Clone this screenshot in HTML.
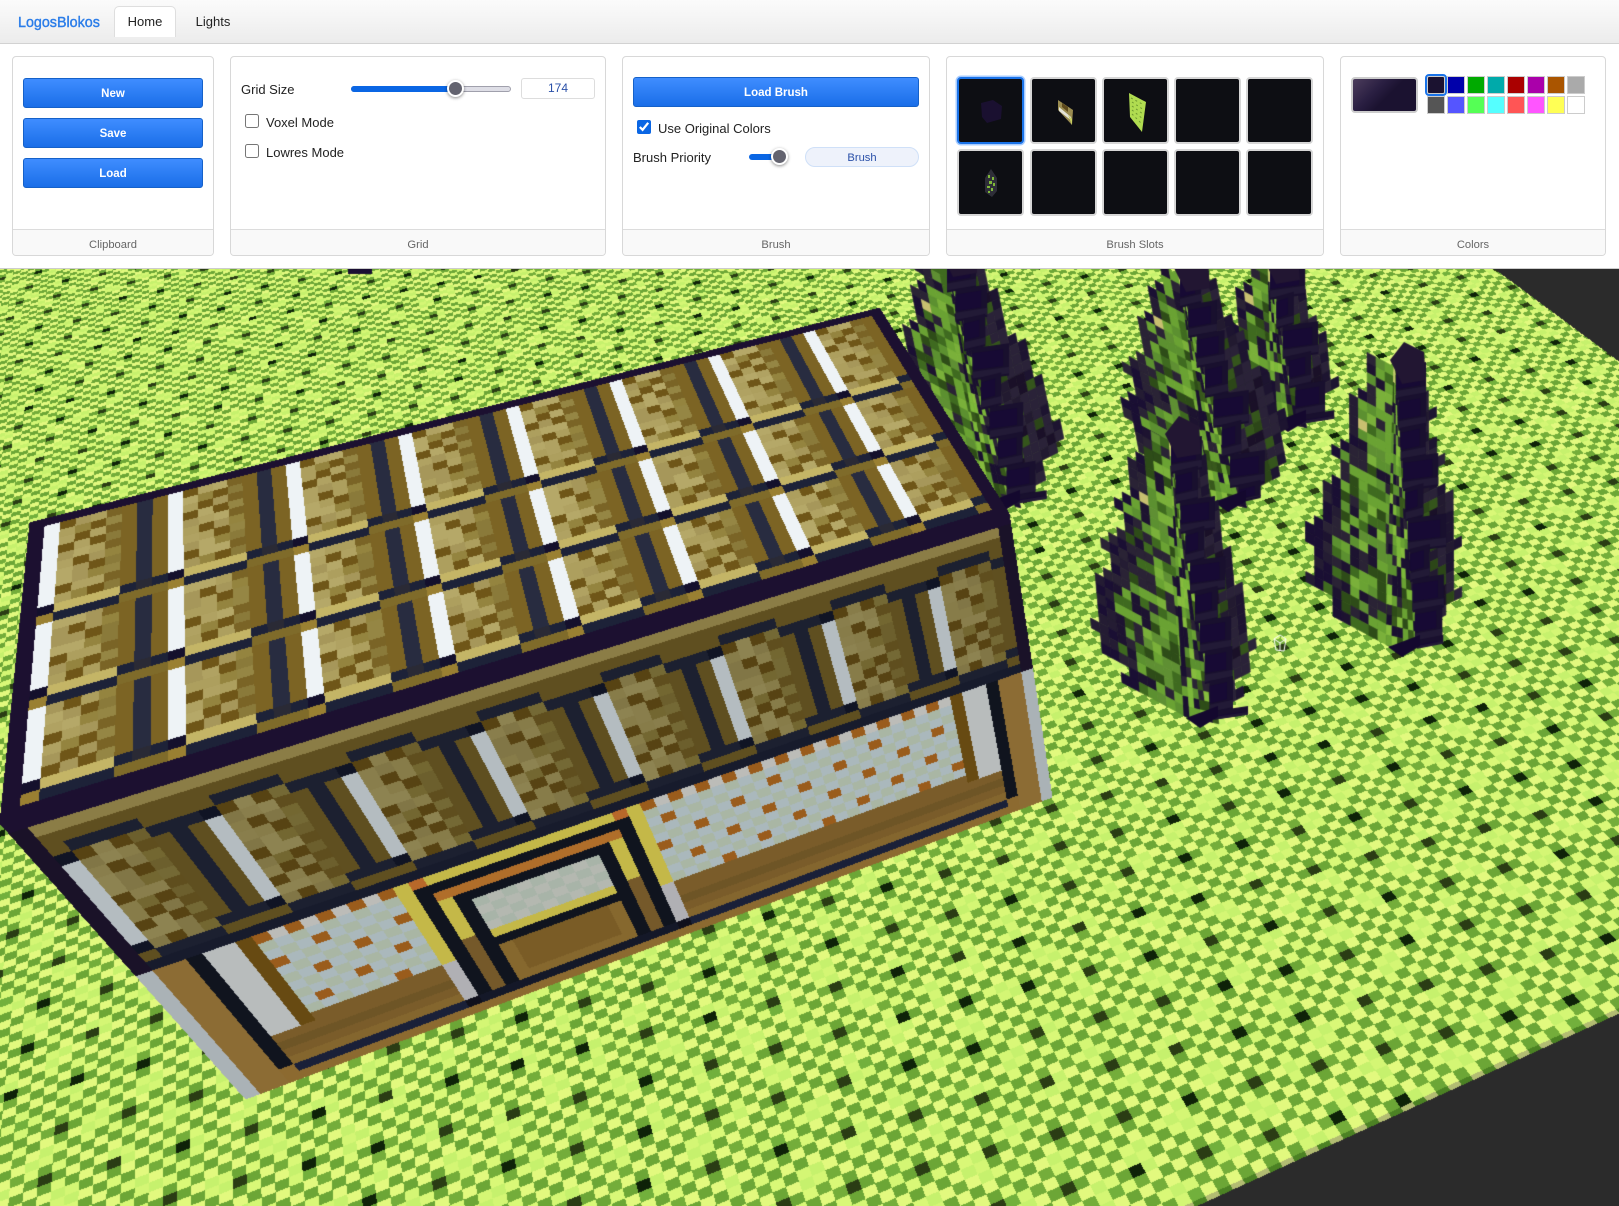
<!DOCTYPE html>
<html lang="en"><head><meta charset="utf-8"><title>LogosBlokos</title>
<style>
*{box-sizing:border-box}
html,body{margin:0;padding:0;width:1619px;height:1206px;overflow:hidden;background:#2b2b2b;font-family:"Liberation Sans",sans-serif;color:#222}
canvas{position:absolute;left:0;top:0;z-index:1}
#hdr{position:absolute;left:0;top:0;width:1619px;height:269px;background:#fff;border-bottom:1px solid #ccc;z-index:2}
#bar{position:absolute;left:0;top:0;width:1619px;height:44px;background:linear-gradient(#fbfbfb,#ececec);border-bottom:1px solid #d2d2d2}
.logo{position:absolute;left:18px;top:15px;font-size:14.3px;line-height:16px;color:#2b7de9;font-weight:400;-webkit-text-stroke:.4px #2b7de9}
.tab{position:absolute;top:6px;height:31px;font-size:13px;line-height:31px;text-align:center}
.tab.on{left:114px;width:62px;background:#fff;border:1px solid #dedede;border-bottom:0;border-radius:5px 5px 0 0;line-height:30px}
.p{position:absolute;top:56px;height:200px;border:1px solid #d8d8d8;border-radius:4px;background:#fff;overflow:hidden}
.p .f{position:absolute;left:0;right:0;bottom:0;height:26px;background:#f9f9f9;border-top:1px solid #dcdcdc;text-align:center;font-size:11.2px;line-height:30px;color:#666}
.a{position:absolute}
.b{position:absolute;background:linear-gradient(#3f8dff,#1a6ee8);border:1px solid #1561c9;border-radius:3px;color:#fff;font-weight:700;font-size:11.5px;text-align:center;line-height:31px;height:30px}
.t{position:absolute;font-size:13px;line-height:16px;color:#222}
.s{position:absolute;width:67px;height:67px;background:#0d0e13;border:2px solid #d6d6d6;border-radius:4px}
.c{position:absolute;width:18px;height:18px;border:1px solid #ccc}
.th{position:absolute;width:17px;height:17px;border-radius:50%;background:#63636f;border:2px solid #fff;box-shadow:0 1px 3px rgba(0,0,0,.45)}
input{position:absolute;margin:0;width:14px;height:14px;accent-color:#0a66e4}
</style></head><body>
<canvas id="c" width="1619" height="1206"></canvas>
<div id="hdr">
<div id="bar">
<div class="logo">LogosBlokos</div>
<div class="tab on">Home</div>
<div class="tab" style="left:195px;width:36px">Lights</div>
</div>

<div class="p" style="left:12px;width:202px">
<div class="b" style="left:10px;top:21px;width:180px">New</div>
<div class="b" style="left:10px;top:61px;width:180px">Save</div>
<div class="b" style="left:10px;top:101px;width:180px">Load</div>
<div class="f">Clipboard</div>
</div>

<div class="p" style="left:230px;width:376px">
<div class="t" style="left:10px;top:25px">Grid Size</div>
<div class="a" style="left:120px;top:29px;width:160px;height:6px;background:#dedee6;border:1px solid #a0a0ac;border-radius:3px"></div>
<div class="a" style="left:120px;top:29px;width:105px;height:6px;background:#0a66e4;border-radius:3px"></div>
<div class="th" style="left:216px;top:23px"></div>
<div class="a" style="left:290px;top:21px;width:74px;height:21px;border:1px solid #ddd;border-radius:3px;text-align:center;font-size:12px;line-height:19px;color:#2a50a8">174</div>
<input type="checkbox" style="left:14px;top:57px">
<div class="t" style="left:35px;top:58px">Voxel Mode</div>
<input type="checkbox" style="left:14px;top:87px">
<div class="t" style="left:35px;top:88px">Lowres Mode</div>
<div class="f">Grid</div>
</div>

<div class="p" style="left:622px;width:308px">
<div class="b" style="left:10px;top:20px;width:286px">Load Brush</div>
<input type="checkbox" checked style="left:14px;top:63px">
<div class="t" style="left:35px;top:64px">Use Original Colors</div>
<div class="t" style="left:10px;top:93px">Brush Priority</div>
<div class="a" style="left:126px;top:97px;width:32px;height:6px;background:#0a66e4;border-radius:3px"></div>
<div class="th" style="left:148px;top:91px"></div>
<div class="a" style="left:182px;top:90px;width:114px;height:20px;background:#eef2fb;border:1px solid #cfe0f8;border-radius:10px;text-align:center;font-size:11.2px;line-height:20px;color:#2a50a8">Brush</div>
<div class="f">Brush</div>
</div>

<div class="p" style="left:946px;width:378px">
<div class="s" style="left:10px;top:20px;border-color:#1a73e8;box-shadow:0 0 0 1.5px #a8ccff"><svg width="63" height="63" style="position:absolute;left:0;top:0"><polygon points="22,24 34,21 43,27 42,40 28,44 23,38" fill="#1a1030"/></svg></div>
<div class="s" style="left:83px;top:20px"><svg width="63" height="63" style="position:absolute;left:0;top:0"><polygon points="26,21 41,31 40,46 26,31" fill="#9a8c50"/><polygon points="27,28 39,38 40,42 27,32" fill="#e4e4d8"/><polygon points="30,24 36,28 36,33 30,28" fill="#5e4a1c"/><polygon points="36,36 40,40 40,46" fill="#c8d060"/></svg></div>
<div class="s" style="left:155px;top:20px"><svg width="63" height="63" style="position:absolute;left:0;top:0"><polygon points="25,14 42,23 38,53 26,38" fill="#b0dc50"/><g stroke="#6f9a30" stroke-width="1" stroke-dasharray="2 3"><line x1="27" y1="19" x2="40" y2="26"/><line x1="28" y1="23" x2="40" y2="31"/><line x1="28" y1="27" x2="39" y2="35"/><line x1="28" y1="31" x2="39" y2="40"/><line x1="28" y1="35" x2="38" y2="45"/></g></svg></div>
<div class="s" style="left:227px;top:20px"></div>
<div class="s" style="left:299px;top:20px"></div>
<div class="s" style="left:10px;top:92px"><svg width="63" height="63" style="position:absolute;left:0;top:0"><polygon points="32,18 38,27 38,40 33,46 26,41 26,27" fill="#2e2e38"/><g fill="#7fb83a"><rect x="29" y="24" width="2" height="3"/><rect x="33" y="26" width="2" height="3"/><rect x="30" y="30" width="3" height="3"/><rect x="34" y="32" width="2" height="3"/><rect x="28" y="35" width="3" height="2"/><rect x="32" y="37" width="2" height="3"/><rect x="29" y="40" width="2" height="2"/></g></svg></div>
<div class="s" style="left:83px;top:92px"></div>
<div class="s" style="left:155px;top:92px"></div>
<div class="s" style="left:227px;top:92px"></div>
<div class="s" style="left:299px;top:92px"></div>
<div class="f">Brush Slots</div>
</div>

<div class="p" style="left:1340px;width:266px">
<div class="a" style="left:10px;top:20px;width:67px;height:36px;border:2px solid #ccc;border-radius:4px;background:linear-gradient(135deg,#4c3d5c 0%,#2a1f42 35%,#1b1230 55%)"></div>
<div class="c" style="left:85.5px;top:19px;background:#1b1230;outline:2px solid #1a73e8;outline-offset:0;border-radius:2px"></div>
<div class="c" style="left:105.5px;top:19px;background:#0000aa"></div>
<div class="c" style="left:125.5px;top:19px;background:#00aa00"></div>
<div class="c" style="left:145.5px;top:19px;background:#00aaaa"></div>
<div class="c" style="left:165.5px;top:19px;background:#aa0000"></div>
<div class="c" style="left:185.5px;top:19px;background:#aa00aa"></div>
<div class="c" style="left:205.5px;top:19px;background:#aa5500"></div>
<div class="c" style="left:225.5px;top:19px;background:#aaaaaa"></div>
<div class="c" style="left:85.5px;top:39px;background:#555555"></div>
<div class="c" style="left:105.5px;top:39px;background:#5555ff"></div>
<div class="c" style="left:125.5px;top:39px;background:#55ff55"></div>
<div class="c" style="left:145.5px;top:39px;background:#55ffff"></div>
<div class="c" style="left:165.5px;top:39px;background:#ff5555"></div>
<div class="c" style="left:185.5px;top:39px;background:#ff55ff"></div>
<div class="c" style="left:205.5px;top:39px;background:#ffff55"></div>
<div class="c" style="left:225.5px;top:39px;background:#ffffff"></div>
<div class="f">Colors</div>
</div>
</div>

<script>
(function(){
var W=1619,H=1206,C=document.getElementById('c'),ctx=C.getContext('2d');
ctx.fillStyle='#2b2b2b';ctx.fillRect(0,0,W,H);
function hex(c){return [parseInt(c.slice(1,3),16),parseInt(c.slice(3,5),16),parseInt(c.slice(5,7),16)]}
var cache={};function hx(c){return cache[c]||(cache[c]=hex(c))}
function hash(i,j){var h=(Math.imul(i,73856093)^Math.imul(j,19349663));h=Math.imul(h^(h>>>13),1274126177);return ((h^(h>>>16))>>>0)%100}
function md(a,b){return ((a%b)+b)%b}

/* ground */
var V1x=7020,V1y=-1450,V2x=165,V2y=-720,Ox=1400,Oy=1107,AL=0.0021,BE=0.0052,AMAX=0.1559;
function tile(i,j){
 var h=hash(i,j);
 if(md(j-5*i,26)==0)return h%3==0?'#0e2208':'#2a3c14';
 var even=md(i+j,2)==0,s=Math.sin(i*1.37+j*.53)+Math.sin(i*.61-j*1.13),plain=s>1.05;
 if(plain){ if(even)return '#d4f674'; return h<10?'#72b03c':'#c6f16d'; }
 if(even)return h%3?'#e2f97e':'#d9f877';
 return h%4?'#6ca636':'#74ad3a';
}
var img=ctx.getImageData(0,0,W,H),D=img.data;
for(var y=268;y<H;y++){for(var x=0;x<W;x++){
 var p=(y*W+x)*4,ax=V1x-x,ay=V1y-y,bx=V2x-x,by=V2y-y,dx=x-Ox,dy=y-Oy,det=ax*by-bx*ay;
 var a=(dx*by-bx*dy)/det,b=(ax*dy-dx*ay)/det;
 if(a>AMAX)continue;
 if(b<-0.0024)continue;
 var i=Math.floor(a/AL),col;
 if(b<0){col=hx(md(i,2)?'#4c8224':'#b2bc72');}
 else{col=hx(tile(i,Math.floor(b/BE)));}
 D[p]=col[0];D[p+1]=col[1];D[p+2]=col[2];D[p+3]=255;
}}
ctx.putImageData(img,0,0);

/* trees */
function rnd(seed){var s=seed;return function(){s=(s*16807)%2147483647;return (s-1)/2147483646}}
function cell(x,y,ux,uy,vx,vy,c){ctx.fillStyle=c;ctx.strokeStyle=c;ctx.lineWidth=.7;ctx.beginPath();ctx.moveTo(x,y);ctx.lineTo(x+ux,y+uy);ctx.lineTo(x+ux+vx,y+uy+vy);ctx.lineTo(x+vx,y+vy);ctx.closePath();ctx.fill();ctx.stroke()}
function pick(r,a){return a[Math.floor(r()*a.length)]}
var INNER=['#6aa233','#6aa233','#5c9030','#5f8f33','#7ab03a','#3f6a20','#2e4c18','#2a2335','#3f6a20','#1d1330'];
var MID=['#6aa233','#3f6a20','#2e4c18','#2a2335','#1d1330','#2a2335','#5c9030','#1d1330'];
var OUTER=['#1a0f33','#241c33','#1a0f33','#2a2335'];
var RIGHT=['#2a2238','#221a30','#2a2238','#35551c','#2c4618','#1a1028','#2a2238'];
var STRIP=['#7cb83a','#6aa233','#5c9030','#38581c','#1a1030','#2a2335','#86bc3e','#2e4c18','#1a1030','#1a1030'];
function tree(t){
 var r=rnd(t.seed),N=Math.round((t.y1-t.y0)/10),vy=(t.y1-t.y0)/N,vx=(t.x1-t.x0)/N,q,c,f;
 function prof(q){var f=q/N,b;b=f<.7?.25+f*1.07:f<.92?1:.74;return b+.06*Math.sin(q*1.3+t.seed);}
 for(q=0;q<N;q++){
  var w=Math.round(t.R*prof(q)+.3);
  for(c=w-1;c>=0;c--){
   var cc=c>=w-1?pick(r,['#1d1430','#2a2238']):pick(r,RIGHT);
   cell(t.x0+vx*q+c*8+10,t.y0+vy*q-c*4,8,-4,vx,vy,cc);
  }
 }
 for(q=0;q<N;q++){
  var wl=Math.round(t.L*prof(q)+.3);
  for(c=wl-1;c>=0;c--){
   var k=c/wl,cl=k>.72?pick(r,OUTER):k>.45?pick(r,MID):pick(r,INNER);
   if(q==Math.round(N*.24)&&c==wl-2)cl='#c8c070';
   cell(t.x0+vx*q-(c+1)*9,t.y0+vy*q-(c+1)*4.8+4.8,9,4.8,vx,vy,cl);
  }
 }
 var M=6;
 for(q=0;q<N;q++){
  f=q/N;
  var wd=5+30*f,x=t.x0+vx*q-10*f,wn=5+30*(q+1)/N;
  for(c=0;c<M;c++){
   var s=pick(r,STRIP);if(q<2&&c<2)s='#c8d070';
   cell(x+wd*c/M,t.y0+vy*q+c*1.3,wd/M,1.3,vx-10/N+(wn-wd)*c/M,vy,s);
  }
 }
 for(q=0;q<N;q+=3){
  f=q/N;
  var xr=t.x0+vx*q-10*f+5+30*f,bw=23+9*Math.sin(q*.9+t.seed)+r()*4,yy=t.y0+vy*q+5,hh=Math.min(vy*3+3,(N-q)*vy-2);
  ctx.fillStyle='#19102e';
  ctx.beginPath();ctx.moveTo(xr-3,yy);ctx.lineTo(xr+bw,yy-5);ctx.lineTo(xr+bw,yy+hh-5);ctx.lineTo(xr-3,yy+hh);ctx.closePath();ctx.fill();
  ctx.fillStyle='#170a34';
  ctx.beginPath();ctx.moveTo(xr-3,yy+5);ctx.lineTo(xr+bw-6,yy+1);ctx.lineTo(xr+bw-6,yy+hh*.55);ctx.lineTo(xr-3,yy+hh*.55+4);ctx.closePath();ctx.fill();
  ctx.fillStyle='#221a36';
  ctx.beginPath();ctx.moveTo(xr-3,yy+hh*.6+4);ctx.lineTo(xr+bw,yy+hh*.6-1);ctx.lineTo(xr+bw,yy+hh-7);ctx.lineTo(xr-3,yy+hh-2);ctx.closePath();ctx.fill();
 }
 ctx.fillStyle='#221632';
 ctx.beginPath();ctx.moveTo(t.x0-4,t.y0-2);ctx.lineTo(t.x0+10,t.y0-20);ctx.lineTo(t.x0+30,t.y0-10);ctx.lineTo(t.x0+32,t.y0+18);ctx.lineTo(t.x0+8,t.y0+22);ctx.closePath();ctx.fill();
 ctx.fillStyle='#14082e';
 ctx.beginPath();ctx.moveTo(t.x1-8,t.y1+2);ctx.lineTo(t.x1+24,t.y1-10);ctx.lineTo(t.x1+24,t.y1+1);ctx.lineTo(t.x1+6,t.y1+12);ctx.closePath();ctx.fill();
}
ctx.save();ctx.beginPath();ctx.rect(0,269,W,H);ctx.clip();
ctx.fillStyle='#1a0f33';ctx.fillRect(348,269,24,5);
tree({x0:1268,y0:262,x1:1282,y1:420,L:6,R:5,seed:71});
tree({x0:1178,y0:270,x1:1222,y1:500,L:9,R:7,seed:29});
tree({x0:945,y0:255,x1:996,y1:500,L:9,R:7,seed:113});
tree({x0:1394,y0:362,x1:1396,y1:645,L:9,R:6,seed:57});
tree({x0:1169,y0:436,x1:1194,y1:716,L:10,R:6,seed:91});
ctx.restore();

/* cursor */
ctx.strokeStyle='#fff';ctx.lineWidth=1;ctx.beginPath();
ctx.moveTo(1274,639);ctx.lineTo(1280,635);ctx.lineTo(1286,639);ctx.lineTo(1280,643);ctx.closePath();
ctx.moveTo(1274,639);ctx.lineTo(1276,650);ctx.lineTo(1284,651);ctx.lineTo(1286,639);
ctx.moveTo(1280,643);ctx.lineTo(1280,651);ctx.stroke();

/* house textures */
function kind(c){var k=(c-1)%8;return k==0?'w':k<=4?'c':(k==5||k==7)?'b':'n'}
var PAT=['TTMT','DTTD','TMDT','TDTD','DTDT','TTTD','TDTM','TTDT'];
function checker(c,r,last){
 var i=(c-1)%8-1,h=hash(c,r),m=PAT[r%8].charAt(i);
 if(last)return '#c4b566';
 if(m=='D')return i==3?'#7a6426':'#6f5618';
 if(m=='M')return '#94843f';
 if(i==3)return h%2?'#8a7a3a':'#958644';
 return ['#ad9f5e','#b5a868','#a6975a','#b0a262'][h%4];
}
function roof(c,r){
 if(c<=0||c>=63||r<=0||r>=31)return '#1c1030';
 var k=kind(c);
 if(r==11||r==20||r==29){return k=='w'?'#14102c':k=='c'?checker(c,r,true):k=='b'?'#1d2238':'#2a2a35';}
 if(r==12||r==21||r==30){return k=='w'?'#9a8032':k=='c'?'#1d2238':'#7f6b2a';}
 return k=='w'?'#eef3f6':k=='b'?'#7c6424':k=='n'?'#282c40':checker(c,r,false);
}
function shade(s,m){var v=hx(s);return '#'+[v[0],v[1],v[2]].map(function(n){var q=Math.round(n*m).toString(16);return q.length<2?'0'+q:q}).join('')}
function lower(c,r){
 var Y='#c4b848',N='#10141e',BR='#75592a',G='#b8bcbc';
 if(c==0||c==63)return '#aab2b6';
 if(c<=2||c>=61)return '#8c6c34';
 if(c==3||c==60)return r>=31?'#8c6a30':N;
 if(r==32)return '#8c6a30';
 if(c>=16&&c<=32){
  if(r==31)return c==16||c==32?'#10101c':'#141828';
  if(c==16||c==32)return r<=25?Y:'#b0b0b4';
  if(c==17||c==31)return r==16?'#b8682a':N;
  if(r==16)return Y;
  if(r==17)return N;
  if(r==18)return '#b06e2a';
  if(c==18||c==30)return r<=23?Y:BR;
  if(r==19)return N;
  if(c==19||c==29)return N;
  if(r<=23)return (c+r)%2?'#b4b8b0':'#a8b4a8';
  if(r==24)return Y;
  if(r==25)return N;
  return c==20||c==28||r==30?'#86682e':'#7a5c26';
 }
 if(r==31)return '#1a2038';
 if(r>=27)return ['#7a5c2a','#6e5526','#7a5c2a','#84662e'][r-27];
 if(c==4||c==5||c==58||c==59)return G;
 if(c==6||c==57)return '#674a12';
 if(r==16)return c%2?'#9a5c1c':'#bcbcb8';
 if(r==26)return '#7a5c2a';
 if(((c+3*r)%8+8)%8==0&&r>=18)return '#9a5c1c';
 return (c+r)%2?'#aab8bc':'#a9b6a4';
}
function wall(c,r){
 if(r>=17)return lower(c,r-1);
 if(r==0)return '#1c1030';
 if(c<=0||c>=63)return '#1a1228';
 if(r==16)return '#171b2c';
 if(r==1)return '#8b7d46';
 if(r==2)return '#5f4f20';
 var k=kind(c),dk='#101424',nv='#1c2030',br='#5f4f20';
 if(r==3||r==15)return k=='c'?nv:br;
 if(r==4||r==14)return k=='w'?dk:k=='c'?shade(checker(c,r,false),.78):nv;
 return k=='w'?'#b4bcc0':k=='b'?br:k=='n'?nv:shade(checker(c,r,false),.78);
}
function build(fn,cols,rows){var T=[];for(var r=0;r<rows;r++){T[r]=[];for(var c=0;c<cols;c++){T[r][c]=hx(fn(c,r))}}return T}
function homog(q){
 var x0=q[0],y0=q[1],x1=q[2],y1=q[3],x2=q[4],y2=q[5],x3=q[6],y3=q[7];
 var dx1=x1-x2,dx2=x3-x2,sx=x0-x1+x2-x3,dy1=y1-y2,dy2=y3-y2,sy=y0-y1+y2-y3,den=dx1*dy2-dx2*dy1;
 var g=(sx*dy2-dx2*sy)/den,h=(dx1*sy-sx*dy1)/den;
 var a=x1-x0+g*x1,b=x3-x0+h*x3,c=x0,d=y1-y0+g*y1,e=y3-y0+h*y3,f=y0;
 return {A:e-f*h,B:c*h-b,C:b*f-c*e,D:f*g-d,E:a-c*g,F:c*d-a*f,G:d*h-e*g,H:b*g-a*h,I:a*e-b*d};
}
var RT=build(roof,64,32),WT=build(wall,64,34);
var RH=homog([29,522,879,307,1009,513,-1,823]),WH=homog([-1,823,1009,513,1052,797,245,1099]);
img=ctx.getImageData(0,0,W,H);D=img.data;
for(y=300;y<1110;y++){for(x=0;x<1060;x++){
 p=(y*W+x)*4;
 var w=WH.G*x+WH.H*y+WH.I,u=(WH.A*x+WH.B*y+WH.C)/w,v=(WH.D*x+WH.E*y+WH.F)/w,cl=null;
 if(u>=0&&u<1&&v>=0&&v<1){cl=WT[Math.floor(v*34)][Math.floor(u*64)];}
 else{
  w=RH.G*x+RH.H*y+RH.I;u=(RH.A*x+RH.B*y+RH.C)/w;v=(RH.D*x+RH.E*y+RH.F)/w;
  if(u>=0&&u<1&&v>=0&&v<1){cl=RT[Math.floor(v*32)][Math.floor(u*64)];}
 }
 if(cl){D[p]=cl[0];D[p+1]=cl[1];D[p+2]=cl[2];D[p+3]=255;}
}}
ctx.putImageData(img,0,0);
})();
</script>
</body></html>
